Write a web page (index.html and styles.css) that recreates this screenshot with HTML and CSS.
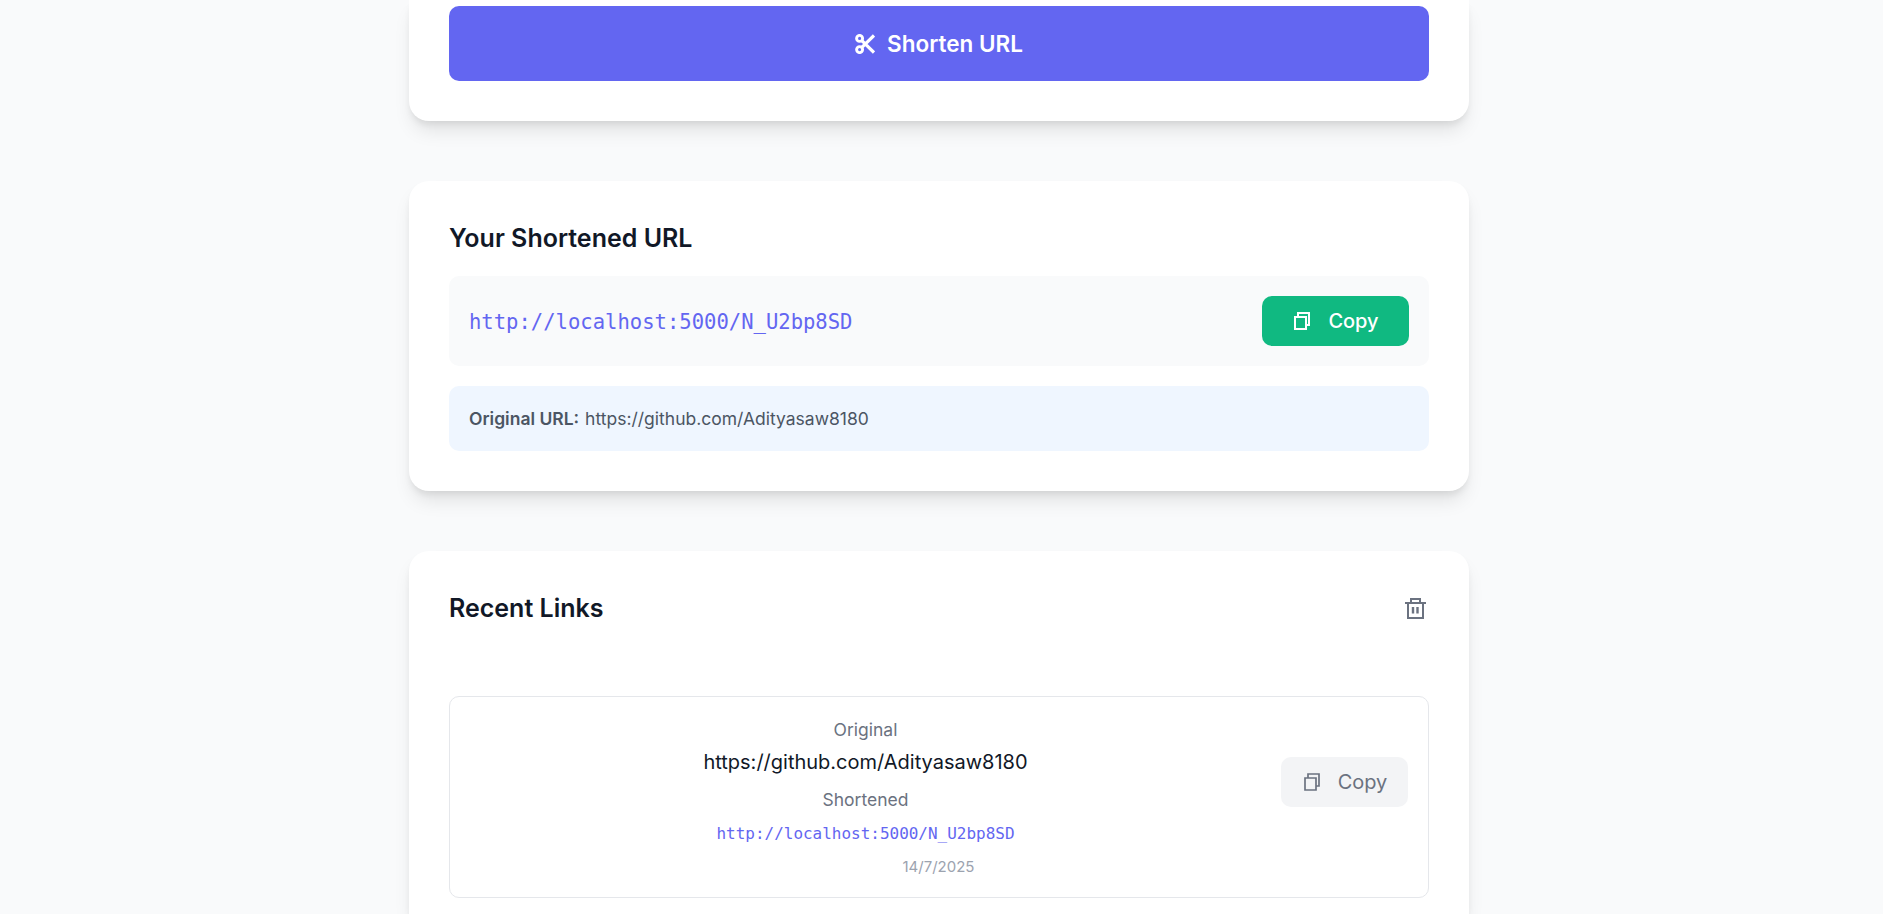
FILE: index.html
```html
<!DOCTYPE html>
<html lang="en">
<head>
<meta charset="utf-8">
<title>URL Shortener</title>
<link rel="stylesheet" href="styles.css">
</head>
<body>
<main class="page">
  <section class="card card-form">
    <button class="btn btn-primary">
      <svg class="icon-cut" viewBox="0 0 20 20" fill="none" stroke="currentColor"><circle cx="4.6" cy="4.4" r="3" stroke-width="2.9"/><circle cx="4.6" cy="15.6" r="3" stroke-width="2.9"/><path d="M6.6 6.4 19 18.6M6.6 13.6 19 1.4" stroke-width="3.2"/></svg>
      <span>Shorten URL</span>
    </button>
  </section>

  <section class="card">
    <h2 class="title">Your Shortened URL</h2>
    <div class="result">
      <a class="short-link">http://localhost:5000/N_U2bp8SD</a>
      <button class="btn btn-copy">
        <svg class="icon-copy" viewBox="0 0 16 18" fill="none" stroke="currentColor" stroke-width="2"><path d="M1 5h11v12H1z"/><path d="M4 5V1h11v12h-3"/></svg>
        <span>Copy</span>
      </button>
    </div>
    <p class="original"><strong>Original URL:</strong> https://github.com/Adityasaw8180</p>
  </section>

  <section class="card card-recent">
    <header class="recent-head">
      <h2 class="title">Recent Links</h2>
      <button class="btn-clear" aria-label="Clear">
        <svg class="icon-trash" viewBox="0 0 21 21" fill="none" stroke="currentColor" stroke-width="2"><path d="M0 5h21M6 5V1h9v4M3 5v15h15V5"/><path d="M8 9v6.5M12.5 9v6.5" stroke-width="2.4"/></svg>
      </button>
    </header>
    <article class="item">
      <div class="item-body">
        <div class="label">Original</div>
        <div class="item-url">https://github.com/Adityasaw8180</div>
        <div class="label">Shortened</div>
        <a class="item-short">http://localhost:5000/N_U2bp8SD</a>
        <time class="date">14/7/2025</time>
      </div>
      <button class="btn btn-soft">
        <svg class="icon-copy" viewBox="0 0 16 18" fill="none" stroke="currentColor" stroke-width="1.7"><path d="M1 5h11v12H1z"/><path d="M4 5V1h11v12h-3"/></svg>
        <span>Copy</span>
      </button>
    </article>
  </section>
</main>
</body>
</html>
```
FILE: styles.css
```css
* { box-sizing: border-box; margin: 0; }
body {
  background: #f9fafb;
  color: #111827;
  font: 20px/30px Inter, "Liberation Sans", sans-serif;
}
.page {
  width: 1060px;
  height: 914px;
  margin-left: 409px;
  display: flex;
  flex-direction: column;
  gap: 60px;
}
.card {
  flex: none;
  padding: 40px;
  border-radius: 20px;
  background: #fff;
  box-shadow: 0 12.5px 19px -4px rgba(0, 0, 0, .1), 0 5px 7.5px -2.5px rgba(0, 0, 0, .08);
}
.card-form { padding-top: 6px; border-radius: 0 0 20px 20px; }
.card-recent {
  flex: 1;
  padding-bottom: 0;
  border-radius: 20px 20px 0 0;
  clip-path: inset(-20px -30px 0);
}
.title { font-size: 25px; line-height: 35px; font-weight: 600; }
.btn {
  display: flex;
  align-items: center;
  justify-content: center;
  flex: none;
  border: 0;
  border-radius: 10px;
  font: 500 20px/30px Inter, "Liberation Sans", sans-serif;
}
.btn-primary {
  width: 100%;
  height: 75px;
  gap: 12px;
  background: #6366f1;
  color: #fff;
  font-size: 22.5px;
  font-weight: 600;
}
.icon-cut { width: 20px; height: 20px; }
.icon-copy { width: 16px; height: 18px; }
.result {
  display: flex;
  align-items: center;
  justify-content: space-between;
  height: 90px;
  margin-top: 20px;
  padding: 20px;
  border-radius: 10px;
  background: #f9fafb;
}
.short-link {
  padding-top: 2px;
  color: #6366f1;
  font: 20.55px/30px "DejaVu Sans Mono", monospace;
}
.btn-copy {
  width: 147px;
  height: 50px;
  padding: 0 0 0 2px;
  gap: 18px;
  background: #10b981;
  color: #fff;
}
.original {
  margin-top: 20px;
  padding: 20px;
  border-radius: 10px;
  background: #eff6ff;
  color: #4b5563;
  font-size: 17.5px;
  line-height: 25px;
}
.original strong { font-weight: 600; margin-right: 1px; }
.recent-head {
  display: flex;
  align-items: center;
  justify-content: space-between;
  padding-right: 3px;
}
.btn-clear {
  display: flex;
  padding: 0;
  border: 0;
  background: none;
  color: #6b7280;
}
.icon-trash { width: 21px; height: 21px; }
.item {
  display: flex;
  align-items: flex-start;
  gap: 20px;
  height: 202px;
  margin-top: 70px;
  padding: 20px;
  border: 1px solid #e5e7eb;
  border-radius: 10px;
}
.item-body {
  flex: 1;
  display: flex;
  flex-direction: column;
  align-items: center;
}
.label { color: #6b7280; font-size: 17.5px; line-height: 25px; }
.item-url { margin: 5px 0 10px; line-height: 30px; }
.item-short {
  margin-top: 9px;
  color: #6366f1;
  font: 15.98px/25px "DejaVu Sans Mono", monospace;
}
.date {
  margin-top: 11px;
  padding-left: 146px;
  color: #9ca3af;
  font-size: 15px;
  line-height: 20px;
}
.btn-soft {
  width: 127px;
  height: 50px;
  margin-top: 40px;
  padding: 0 0 0 2px;
  gap: 18px;
  background: #f3f4f6;
  color: #6b7280;
  font-weight: 400;
}
```
